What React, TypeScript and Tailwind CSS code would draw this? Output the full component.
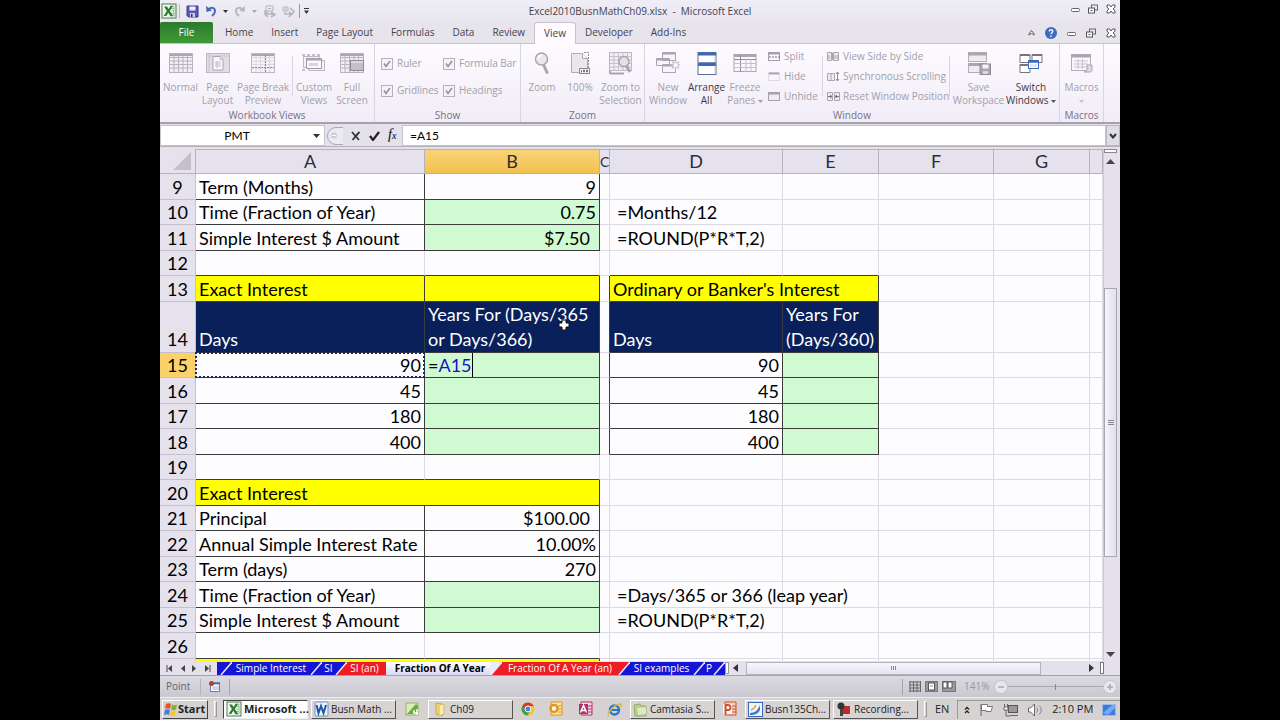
import type { ReactNode } from "react"
import clsx from "clsx"

const ribbonTabs = ["Home", "Insert", "Page Layout", "Formulas", "Data", "Review", "View", "Developer", "Add-Ins"]

type Cell = {
  text?: ReactNode
  fill?: "yellow" | "navy" | "green"
  right?: boolean
  boxed?: boolean
  span?: number
  pad?: boolean
  label?: string
}

type Row = { n?: number, h: "short" | "tall" | "double" | "cut", cells: Cell[] }

const box = (text?: ReactNode, fill?: Cell["fill"], rest: Partial<Cell> = {}): Cell => ({ text, fill, boxed: true, ...rest })
const num = (text: ReactNode, fill?: Cell["fill"], pad = false): Cell => ({ text, fill, boxed: true, right: true, pad })
const gap: Cell = {}

const rows: Row[] = [
  { n: 9, h: "tall", cells: [box("Term (Months)"), num("9")] },
  { n: 10, h: "short", cells: [box("Time (Fraction of Year)"), num("0.75", "green"), gap, { text: "=Months/12", pad: true }] },
  { n: 11, h: "tall", cells: [box("Simple Interest $ Amount"), num("$7.50", "green", true), gap, { text: "=ROUND(P*R*T,2)", pad: true }] },
  { n: 12, h: "short", cells: [] },
  { n: 13, h: "tall", cells: [box("Exact Interest", "yellow"), box("", "yellow"), gap, box("Ordinary or Banker's Interest", "yellow", { span: 2 })] },
  { n: 14, h: "double", cells: [box("Days", "navy"), box(<>Years For (Days/365<br />or Days/366)</>, "navy", { label: "pointer" }), gap, box("Days", "navy"), box(<>Years For<br />(Days/360)</>, "navy")] },
  { n: 15, h: "short", cells: [{ ...num("90"), label: "marching" }, box("", "green", { label: "editing" }), gap, num("90"), box("", "green")] },
  { n: 16, h: "tall", cells: [num("45"), box("", "green"), gap, num("45"), box("", "green")] },
  { n: 17, h: "short", cells: [num("180"), box("", "green"), gap, num("180"), box("", "green")] },
  { n: 18, h: "tall", cells: [num("400"), box("", "green"), gap, num("400"), box("", "green")] },
  { n: 19, h: "short", cells: [] },
  { n: 20, h: "tall", cells: [box("Exact Interest", "yellow", { span: 2 })] },
  { n: 21, h: "short", cells: [box("Principal"), num("$100.00", undefined, true)] },
  { n: 22, h: "tall", cells: [box("Annual Simple Interest Rate"), num("10.00%")] },
  { n: 23, h: "short", cells: [box("Term (days)"), num("270")] },
  { n: 24, h: "tall", cells: [box("Time (Fraction of Year)"), box("", "green"), gap, { text: "=Days/365 or 366 (leap year)", pad: true }] },
  { n: 25, h: "short", cells: [box("Simple Interest $ Amount"), box("", "green"), gap, { text: "=ROUND(P*R*T,2)", pad: true }] },
  { n: 26, h: "tall", cells: [] },
  { h: "cut", cells: [box("", "yellow", { span: 2 })] },
]

const COLS = 8

// true when the grid position is covered by a boxed cell
const isBoxed = (row: Row | undefined, col: number) => {
  let at = 0
  for (const cell of row?.cells ?? []) {
    const span = cell.span ?? 1
    if (col >= at && col < at + span) return !!cell.boxed
    at += span
  }
  return false
}

/* ---------- icons ---------- */

const Svg = ({ w, h, children }: { w: number, h: number, children: ReactNode }) => (
  <svg width={w} height={h} viewBox={`0 0 ${w} ${h}`} fill="none" className="shrink-0" aria-hidden="true">{children}</svg>
)

const ExcelIcon = () => (
  <Svg w={16} h={16}>
    <rect x="1" y="1" width="14" height="14" fill="#f4faf2" stroke="#4a7a4c" />
    <path d="M9 3h4v10H9M10 5.500h3M10 8h3M10 10.500h3" stroke="#8fbd8d" />
    <path d="M3 3.500h3l1.500 2.500L9.500 3H12L8.800 8l3.400 5H9.300L7.300 9.800 5.300 13H2.600l3.300-5z" fill="#2c7a34" />
  </Svg>
)

const WordIcon = () => (
  <Svg w={15} h={16}>
    <rect x="1" y="1" width="13" height="14" rx="1" fill="#eef4fc" stroke="#6a8fc4" />
    <path d="M2.500 4l2 8 2.500-7 2.500 7 2.500-8" stroke="#1f55a5" strokeWidth="2" />
  </Svg>
)

const SaveIcon = () => (
  <Svg w={13} h={13}>
    <path d="M1 1h11v11H2.500L1 10.500z" fill="#5b57b8" stroke="#3c3a8c" />
    <path d="M3.500 1.500h6v4h-6z" fill="#eef" />
    <path d="M4 8h5v4H4z" fill="#cfd0ea" /><path d="M5 9h1.500v3H5z" fill="#333" />
  </Svg>
)

const UndoIcon = ({ flip = false }: { flip?: boolean }) => (
  <svg width="12" height="12" viewBox="0 0 12 12" fill="none" className={flip ? "-scale-x-100 shrink-0" : "shrink-0"} aria-hidden="true">
    <path d="M3 5c2-3 7-3 7 1 0 2-1 3.500-3 5" stroke={flip ? "#b9b6c0" : "#4468b8"} strokeWidth="2" />
    <path d="M1 1l.5 6L7 5.500z" fill={flip ? "#b9b6c0" : "#4468b8"} />
  </svg>
)

const Caret = ({ color = "#333" }: { color?: string }) => (
  <Svg w={5} h={3}><path d="M0 0h5L2.500 3z" fill={color} /></Svg>
)

const TraceIcon = ({ down = false }: { down?: boolean }) => (
  <Svg w={13} h={13}>
    <path d={down ? "M1 2h5v4H1zM2 4h3" : "M3 1h7v5H3zM5 3.500h3"} stroke="#b5b2bd" />
    <path d={down ? "M3 7v2h6M7 6.500L9.500 9 7 12M8 3l4 3.500-2 3" : "M2 5v4h9M5 6.500L2 9l3 3M8 7l4 2.500-4 2.500"} stroke="#b5b2bd" strokeWidth="1.500" />
  </Svg>
)

const gridLines = "M1 4.500h22M1 8h22M1 11.500h22M1 15h22M5 1v18M9.500 1v18M14 1v18M18.500 1v18"

const NormalIcon = () => (
  <Svg w={24} h={20}><rect x=".5" y=".5" width="23" height="19" fill="#f1eef5" stroke="#b9b4be" /><path d={gridLines} stroke="#b9b4be" /><path d="M1 2h22" stroke="#aaa5b0" strokeWidth="2" /></Svg>
)
const PageLayoutIcon = () => (
  <Svg w={24} h={20}><rect x=".5" y=".5" width="23" height="19" fill="#e2dde5" stroke="#bdb8c2" /><path d="M1 3h22M3 1v18" stroke="#c9c4ce" /><path d="M7 3.500h7l3 3V17H7z" fill="#faf8fc" stroke="#aaa5b0" /><path d="M14 3.500v3h3M9 9h6M9 11h6M9 13h6M11 8v7" stroke="#c5c0ca" /></Svg>
)
const PageBreakIcon = () => (
  <Svg w={24} h={20}><rect x=".5" y=".5" width="23" height="19" fill="#f6f3f8" stroke="#bdb8c2" /><path d={gridLines} stroke="#dcd8e0" /><path d="M1 2h22" stroke="#aaa5b0" strokeWidth="2" /><path d="M14.500 2v17M1 14.500h22" stroke="#8f8a95" strokeDasharray="2 1" /></Svg>
)
const CustomViewsIcon = () => (
  <Svg w={24} h={20}><path d="M1.500 3.500h16v11h-16zM6.500 7.500h16v10h-16z" stroke="#bcb7c1" fill="#f4f1f7" /><path d="M4.500 5.500h15v10h-15z" stroke="#a09ba6" fill="#faf8fc" /><path d="M5 6.500h14" stroke="#aaa5b0" strokeWidth="2" /><path d="M7 10h9v3H7z" fill="#d9d4de" /><path d="M0 2h3M5 2h3M10 2h3M15 2h3M0 17h3" stroke="#8f8a95" /></Svg>
)
const FullScreenIcon = () => (
  <Svg w={24} h={20}><rect x=".5" y=".5" width="23" height="19" fill="#f1eef5" stroke="#b9b4be" /><path d={gridLines} stroke="#b9b4be" /><path d="M1 2h22" stroke="#aaa5b0" strokeWidth="2" /><rect x="10.500" y="7.500" width="13" height="10" fill="#c4bfca" stroke="#8f8a95" /><path d="M11 9h12" stroke="#f5f2f8" /></Svg>
)
const ZoomIcon = () => (
  <Svg w={16} h={23}><path d="M9.500 12.500l3.500 8" stroke="#a9a5ad" strokeWidth="3" strokeLinecap="round" /><circle cx="7.500" cy="7" r="6" fill="#e9e7ed" stroke="#a9a5ad" strokeWidth="1.500" /><path d="M4 7c0-2 1.500-3.500 4-3.500" stroke="#fff" strokeWidth="1.500" /></Svg>
)
const HundredIcon = () => (
  <Svg w={20} h={23}><path d="M1.500 1.500h11l5 5v14h-16z" fill="#ebe5ec" stroke="#b2adb7" /><path d="M12.500 1.500v5h5" fill="#fff" stroke="#aaa5b0" /><path d="M18.500 2v20M14 .5h5" stroke="#918c97" strokeDasharray="2 1" /><rect x="9.500" y="16.500" width="10" height="5" fill="#fff" stroke="#8a8590" /><path d="M11.500 18v2.500M13.500 18h1v2h-1zM16.500 18h1v2h-1z" stroke="#77727d" /></Svg>
)
const ZoomSelIcon = () => (
  <Svg w={24} h={23}><rect x=".5" y=".5" width="22" height="18" fill="#f1eef5" stroke="#bcb7c1" /><path d={gridLines} stroke="#c5c0ca" /><path d="M1 21.500h14M1 19v3" stroke="#aaa5b0" strokeWidth="2" /><circle cx="15" cy="9.500" r="5" fill="#e4e0e8" stroke="#a9a5ad" strokeWidth="1.500" /><path d="M17.500 14l3.500 6" stroke="#aaa5b0" strokeWidth="3" /></Svg>
)
const NewWindowIcon = () => (
  <Svg w={24} h={24}><path d="M6.500 1.500h13v8h-13zM.5 7.500h13v7H.500zM6.500 13.500h13v8h-13z" fill="#f8f5fa" stroke="#aaa5b0" /><path d="M7 2.500h12M1 8.500h12M7 14.500h12" stroke="#aaa5b0" strokeWidth="2" /><path d="M19.500 9v10M14.500 14h10M16 10.500l7 7M23 10.500l-7 7" stroke="#c5c0ca" strokeWidth="1.500" /><circle cx="19.500" cy="14" r="2" fill="#fff" /></Svg>
)
const ArrangeIcon = () => (
  <Svg w={20} h={23}><rect x="1" y=".5" width="18" height="22" fill="#fff" stroke="#5d6f90" /><path d="M1 2h18M1 12.500h18" stroke="#3c68bd" strokeWidth="3" /><path d="M1 10.500h18" stroke="#7b91bd" /><path d="M18 5v5M18 15v6" stroke="#ccd" /></Svg>
)
const FreezeIcon = () => (
  <Svg w={24} h={19}><rect x="1" y=".5" width="22" height="17" fill="#faf8fc" stroke="#aaa5b0" /><path d="M1 1.500h22" stroke="#aaa5b0" strokeWidth="3" /><path d="M1 5.500h22M7.500 1v17" stroke="#918c97" /><path d="M1 9.500h22M1 13.500h22M13 5v13M18 5v13" stroke="#c5c0ca" /></Svg>
)
const SaveWorkspaceIcon = () => (
  <Svg w={24} h={24}><rect x="1.500" y="1.500" width="18" height="9" fill="#eeebf1" stroke="#b2adb7" /><rect x="1.500" y="12.500" width="18" height="9" fill="#eeebf1" stroke="#b2adb7" /><path d="M1 3h19M1 13.500h19" stroke="#aaa5b0" strokeWidth="3" /><rect x="13" y="13" width="10.500" height="10.500" fill="#aaa5b0" stroke="#8f8a95" /><path d="M15.500 13.500h6v4h-6z" fill="#f5f2f8" /><path d="M16 20h5v3h-5z" fill="#dcd8e0" /></Svg>
)
const SwitchIcon = () => (
  <Svg w={24} h={20}><path d="M1 1.500h10v8H1zM13 1.500h10v8H13zM1 11.500h10v8H1z" fill="#fff" stroke="#77727d" /><path d="M1 2h10M13 2h10M1 12h10" stroke="#77727d" strokeWidth="2" /><rect x="9.500" y="7.500" width="10" height="8" fill="#fff" stroke="#3c68bd" /><path d="M9 8.500h11" stroke="#3c68bd" strokeWidth="2.500" /><path d="M11 11h7v3h-7z" fill="#dfe9fb" /></Svg>
)
const MacrosIcon = () => (
  <Svg w={22} h={19}><rect x=".5" y=".5" width="19" height="16" fill="#faf8fc" stroke="#b2adb7" /><path d="M0 2h20" stroke="#aaa5b0" strokeWidth="3" /><path d="M3 7h14M3 10h14M3 13h14M7 5v10M11.500 5v10" stroke="#c9c0cc" /><path d="M13 18h6c1 0 2-1 2-2v-5h-5v5c0 1-2 1-3 2z" fill="#dcd8e0" stroke="#aaa5b0" /></Svg>
)

const SmallIcon = ({ kind }: { kind: string }) => (
  <Svg w={13} h={11}>
    {kind === "Split" && <><rect x=".5" y="1.500" width="11" height="8" stroke="#a5a0ab" /><path d="M1 2.500h10" stroke="#a5a0ab" strokeWidth="2" /><path d="M1 6h11" stroke="#77727d" strokeDasharray="2 1" /></>}
    {kind === "Hide" && <><rect x=".5" y="1.500" width="11" height="8" stroke="#c5c0ca" strokeDasharray="1 1" /><path d="M1 2.500h10" stroke="#aaa5b0" strokeWidth="2" /></>}
    {kind === "Unhide" && <><rect x=".5" y="1.500" width="11" height="8" fill="#eeebf1" stroke="#a5a0ab" /><path d="M1 2.500h10" stroke="#a5a0ab" strokeWidth="2" /></>}
    {kind === "View Side by Side" && <><path d="M.5 1.500h4v8h-4zM6.500 1.500h5v8h-5z" fill="#eeebf1" stroke="#aaa5b0" /><path d="M2 4v4M8 4v4M10 4v4M4 2h1.500v7" stroke="#aaa5b0" /></>}
    {kind === "Synchronous Scrolling" && <><path d="M.5 2.500h7v7h-7zM4 3v7" fill="#eeebf1" stroke="#aaa5b0" /><path d="M10.500 1v9M9 3l1.500-2L12 3M9 8l1.500 2L12 8" stroke="#918c97" /></>}
    {kind === "Reset Window Position" && <><path d="M.5 1.500h5v8h-5zM7.500 1.500h5v8h-5z" fill="#eeebf1" stroke="#aaa5b0" /><path d="M1 5.500h4M3 4l2 1.500L3 7M12 5.500H8M10 4L8 5.500 10 7" stroke="#77727d" /></>}
  </Svg>
)

const WindowButtons = ({ gapClass }: { gapClass: string }) => (
  <div className={clsx("flex items-center", gapClass)}>
    <button type="button" aria-label="Minimize"><Svg w={9} h={10}><rect x=".5" y="4.500" width="8" height="3" rx="1" stroke="#666" fill="#fff" /></Svg></button>
    <button type="button" aria-label="Restore"><Svg w={10} h={10}><rect x="3.500" y="1" width="6" height="5" stroke="#666" /><rect x=".5" y="4" width="6" height="5" fill="#fff" stroke="#555" /><path d="M2.500 6.500h2" stroke="#555" /></Svg></button>
    <button type="button" aria-label="Close"><Svg w={10} h={10}><path d="M1 1h2.500L5 3l1.500-2H9v2L7.200 5 9 7v2H6.500L5 7 3.500 9H1V7l1.800-2L1 3z" fill="#fff" stroke="#555" /></Svg></button>
  </div>
)

/* ---------- ribbon pieces ---------- */

const Big = ({ icon, children, w, dark = false }: { icon: ReactNode, children: ReactNode, w: string, dark?: boolean }) => (
  <button type="button" className={clsx("flex flex-col items-center shrink-0 whitespace-nowrap leading-[13px] pt-[3px]", w, dark ? "text-[#3e3a46]" : "text-[#a39fa9]")}>
    <span className="flex h-8 items-center mb-0.5">{icon}</span>
    <span>{children}</span>
  </button>
)

const Group = ({ title, w, children }: { title: string, w: string, children: ReactNode }) => (
  <div className={clsx("flex flex-col shrink-0 border-r border-[#d9d5e0]", w)}>
    <div className="flex grow">{children}</div>
    <p className="text-center leading-[14px] text-[#77727f]">{title}</p>
  </div>
)

const Check = ({ label }: { label: string }) => (
  <label className="flex items-center h-[27px] gap-1 whitespace-nowrap text-[#a39fa9]">
    <span className="relative flex">
      <input type="checkbox" defaultChecked className="appearance-none size-3 border border-[#b5b0bb] bg-[#f4f2f7]" />
      <svg width="12" height="12" viewBox="0 0 12 12" fill="none" className="absolute inset-0 pointer-events-none" aria-hidden="true"><path d="M3 5.500l2 3L9 3" stroke="#928d99" strokeWidth="1.500" /></svg>
    </span>
    {label}
  </label>
)

const Small = ({ label }: { label: string }) => (
  <button type="button" className="flex items-center h-5 gap-[3px] whitespace-nowrap text-[#a39fa9]"><SmallIcon kind={label} />{label}</button>
)

const Divider = () => <div className="w-px h-10 mt-3 shrink-0 bg-[#d9d5e0]" />

/* ---------- sheet tabs ---------- */

const Slash = ({ from, to }: { from: string, to: string }) => (
  <Svg w={12} h={13}>
    <path d="M0 0h12L1 13H0z" fill={from} /><path d="M12 0v13H1z" fill={to} /><path d="M1 13L12 0" stroke="#e8e6f4" strokeWidth="1.500" />
  </Svg>
)

const BLUE = "#1515d8"
const RED = "#ee1c24"

const TabBar = () => (
  <nav className="flex items-center h-[13px] text-[10px] leading-[13px] whitespace-nowrap text-white">
    <div className="w-[3px] h-full bg-[#1515d8]" />
    <Slash from={BLUE} to={BLUE} />
    <button type="button" className="w-[78px] bg-[#1515d8] text-center">Simple Interest</button>
    <Slash from={BLUE} to={BLUE} />
    <button type="button" className="w-[13px] bg-[#1515d8]">SI</button>
    <Slash from={BLUE} to={RED} />
    <button type="button" className="w-[39px] bg-[#ee1c24] pr-1 text-center">SI (an)</button>
    <button type="button" className="w-[104px] bg-linear-to-b from-white to-[#d9d8f4] pl-1 text-center font-bold text-black">Fraction Of A Year</button>
    <Slash from="#ecebfa" to={RED} />
    <button type="button" className="w-[116px] bg-[#ee1c24] text-center">Fraction Of A Year (an)</button>
    <Slash from={RED} to={BLUE} />
    <button type="button" className="w-[63px] bg-[#1515d8] text-center">SI examples</button>
    <Slash from={BLUE} to={BLUE} />
    <button type="button" className="w-2 bg-[#1515d8]">P</button>
    <Slash from={BLUE} to={BLUE} />
  </nav>
)

/* ---------- taskbar ---------- */

const TaskButton = ({ icon, children, active = false }: { icon: ReactNode, children: ReactNode, active?: boolean }) => (
  <button type="button" className={clsx("flex items-center w-[85px] h-[19px] shrink-0 gap-0.5 pl-0.5 border whitespace-nowrap", active ? "bg-white text-[11px] font-bold border-t-[#444] border-l-[#444] border-r-[#eee] border-b-[#eee]" : "bg-[#d8d4d4] text-[10px] border-t-white border-l-white border-r-[#555] border-b-[#555]")}>
    {icon}{children}
  </button>
)

const OfficeIcon = ({ letter, color, paper }: { letter: string, color: string, paper: string }) => (
  <button type="button" aria-label={letter} className="shrink-0">
    <Svg w={16} h={16}>
      <path d="M3 1h11v13H3z" fill={paper} stroke={color} /><path d="M10 5h4M10 8h4M10 11h4" stroke={color} />
      {letter === "Outlook" && <circle cx="6" cy="7.500" r="3.500" fill="#fff" stroke={color} strokeWidth="2.500" />}
      {letter === "Access" && <><path d="M1 3h9v10H1z" fill={color} /><path d="M2.500 11.500l3-7 3 7M4 9.500h3" stroke="#fff" strokeWidth="1.500" /></>}
      {letter === "PowerPoint" && <><path d="M1 3h9v10H1z" fill="#fff" /><path d="M3.500 13V4h2.500a2.500 2.500 0 010 5H4" stroke={color} strokeWidth="2" /></>}
    </Svg>
  </button>
)

const Folder = () => (
  <Svg w={17} h={15}><path d="M5 1l6 1v12l-6-2z" fill="#f2d77c" stroke="#d0a93c" /><path d="M8 3l5-1v10l-5 2z" fill="#fbeeb0" stroke="#d9b95a" /></Svg>
)

const App = () => {
  return (
    <div className="min-h-screen bg-black font-['Open_Sans','Noto_Sans',sans-serif]">
      <main className="flex flex-col w-3/4 h-screen mx-auto overflow-hidden bg-[#e4e1ea] text-[10px] text-[#333]">

        {/* title bar */}
        <header className="relative flex items-center h-[22px] shrink-0 pl-px pr-1 bg-linear-to-b from-[#efedf6] to-[#e9e6ef]">
          <div className="flex items-center">
            <ExcelIcon />
            <div className="w-px h-3.5 ml-0.5 mr-1.5 bg-[#bbb]" />
            <button type="button" aria-label="Save"><SaveIcon /></button>
            <button type="button" aria-label="Undo" className="flex items-center gap-1.5 ml-1.5"><UndoIcon /><Caret /></button>
            <button type="button" aria-label="Redo" className="flex items-center gap-1.5 ml-1.5"><UndoIcon flip /><Caret color="#aaa" /></button>
            <button type="button" aria-label="Trace precedents" className="ml-1.5"><TraceIcon /></button>
            <button type="button" aria-label="Trace dependents" className="ml-1.5"><TraceIcon down /></button>
            <div className="w-px h-3.5 mx-1 bg-[#999]" />
            <button type="button" aria-label="Customize toolbar"><Svg w={5} h={6}><path d="M0 .5h5" stroke="#333" /><path d="M0 2.500h5L2.500 6z" fill="#333" /></Svg></button>
          </div>
          <h1 className="absolute inset-x-0 text-center pointer-events-none text-[#45414c]">Excel2010BusnMathCh09.xlsx&nbsp; -&nbsp; Microsoft Excel</h1>
          <div className="ml-auto mb-1"><WindowButtons gapClass="gap-2" /></div>
        </header>

        {/* ribbon tabs */}
        <nav className="flex items-stretch h-[22px] shrink-0 pr-1 bg-[#e7e4ec] border-b border-[#c6c2cc]">
          <button type="button" className="w-[53px] mr-[3px] rounded-t-xs bg-linear-to-b from-[#2b7a2e] to-[#3f9a35] text-white">File</button>
          {ribbonTabs.map((tab) => (
            <button
              key={tab} type="button"
              className={clsx("px-[9px] whitespace-nowrap text-[#45414c]", tab === "View" && "-mb-px rounded-t-sm border border-b-0 border-[#c6c2cc] bg-[#fdfbff]")}
            >
              {tab}
            </button>
          ))}
          <div className="flex items-center gap-2.5 ml-auto">
            <button type="button" aria-label="Collapse ribbon"><Svg w={7} h={7}><path d="M.5 5.500l3-4 3 4-1 .5-2-2-2 2z" stroke="#555" fill="#fff" /></Svg></button>
            <button type="button" aria-label="Help"><Svg w={12} h={12}><circle cx="6" cy="6" r="6" fill="#3b6cc0" /><path d="M4.200 4.500c0-2.500 3.800-2.200 3.600 0C7.700 5.700 6 5.700 6 7.300M6 8.500V10" stroke="#fff" strokeWidth="1.300" /></Svg></button>
            <WindowButtons gapClass="gap-2.5" />
          </div>
        </nav>

        {/* ribbon */}
        <section className="flex h-20 shrink-0 border-b-2 border-[#a5a1aa] bg-linear-to-b from-[#fdfbff] to-[#f1ecf7]">
          <Group title="Workbook Views" w="w-[215px]">
            <div className="flex pl-0.5">
              <Big w="w-[37px]" icon={<NormalIcon />}>Normal</Big>
              <Big w="w-[37px]" icon={<PageLayoutIcon />}>Page<br />Layout</Big>
              <Big w="w-[54px]" icon={<PageBreakIcon />}>Page Break<br />Preview</Big>
              <div className="flex mx-0.5"><Divider /></div>
              <Big w="w-[38px]" icon={<CustomViewsIcon />}>Custom<br />Views</Big>
              <Big w="w-[38px]" icon={<FullScreenIcon />}>Full<br />Screen</Big>
            </div>
          </Group>
          <Group title="Show" w="w-[146px]">
            <div className="grid grid-cols-[62px_auto] content-start pt-1.5 pl-1.5">
              <Check label="Ruler" />
              <Check label="Formula Bar" />
              <Check label="Gridlines" />
              <Check label="Headings" />
            </div>
          </Group>
          <Group title="Zoom" w="w-[124px]">
            <div className="flex pl-0.5">
              <Big w="w-[38px]" icon={<ZoomIcon />}>Zoom</Big>
              <Big w="w-[38px]" icon={<HundredIcon />}>100%</Big>
              <Big w="w-[43px]" icon={<ZoomSelIcon />}>Zoom to<br />Selection</Big>
            </div>
          </Group>
          <Group title="Window" w="w-[415px]">
            <div className="flex grow pl-1">
              <Big w="w-[38px]" icon={<NewWindowIcon />}>New<br />Window</Big>
              <Big w="w-[39px]" icon={<ArrangeIcon />} dark>Arrange<br />All</Big>
              <Big w="w-[38px]" icon={<FreezeIcon />}>Freeze<br />Panes <span className="inline-flex align-middle"><Caret color="#a39fa9" /></span></Big>
              <div className="w-[54px] pt-0.5 pl-1"><Small label="Split" /><Small label="Hide" /><Small label="Unhide" /></div>
              <div className="flex mx-1"><Divider /></div>
              <div className="w-[120px] pt-0.5"><Small label="View Side by Side" /><Small label="Synchronous Scrolling" /><Small label="Reset Window Position" /></div>
              <div className="flex mx-0.5"><Divider /></div>
              <Big w="w-[53px]" icon={<SaveWorkspaceIcon />}>Save<br />Workspace</Big>
              <Big w="w-[52px]" icon={<SwitchIcon />} dark>Switch<br />Windows <span className="inline-flex align-middle"><Caret color="#555" /></span></Big>
            </div>
          </Group>
          <Group title="Macros" w="w-[44px]">
            <Big w="w-[43px]" icon={<MacrosIcon />}>Macros<br /><span className="inline-flex align-middle"><Caret color="#c5c0ca" /></span></Big>
          </Group>
        </section>

        {/* formula bar */}
        <div className="flex h-[22px] shrink-0 mt-px border-b border-[#b5b1bc] font-[Lato,sans-serif] text-[12px] text-black">
          <div className="flex items-center w-[165px] pr-1 bg-white border border-[#c6c2cc]">
            <input aria-label="Name box" defaultValue="PMT" className="w-full min-w-0 bg-transparent text-center outline-none" />
            <button type="button" aria-label="Name list"><Svg w={7} h={4}><path d="M0 0h7L3.500 4z" fill="#333" /></Svg></button>
          </div>
          <div className="flex items-center w-[77px] gap-2 pl-0.5 bg-[#e4e1ec]">
            <Svg w={16} h={18}><path d="M16 .5H9a8 8 0 000 17h7" fill="#eceaf1" stroke="#aaa6b2" /><circle cx="7" cy="8.500" r="3" fill="#cfccd6" /><path d="M5 8.500h4" stroke="#fff" /></Svg>
            <button type="button" aria-label="Cancel"><Svg w={10} h={10}><path d="M1 1l7 8M8.500 1C6 3.500 4 6 1.500 9" stroke="#333" strokeWidth="1.800" /></Svg></button>
            <button type="button" aria-label="Enter"><Svg w={11} h={10}><path d="M1 5l3 4 6-8" stroke="#222" strokeWidth="2.200" /></Svg></button>
            <button type="button" aria-label="Insert function" className="font-['Liberation_Serif',serif] text-[14px] italic leading-4">f<span className="text-[10px]">x</span></button>
          </div>
          <input aria-label="Formula" defaultValue="=A15" className="grow min-w-0 pl-[7px] bg-white border border-[#c6c2cc] outline-none" />
          <button type="button" aria-label="Expand formula bar" className="flex items-center justify-center w-3.5 bg-[#dfdce6] border border-[#bbb7c2]"><Svg w={8} h={6}><path d="M1 1l3 3.500L7 1" stroke="#333" strokeWidth="2" /></Svg></button>
        </div>

        {/* sheet */}
        <div className="flex grow min-h-0 pt-0.5">
          <div className="grow min-w-0 overflow-hidden bg-[#fdfcff]">
            <table className="w-full table-fixed border-separate border-spacing-0 font-[Lato,sans-serif] text-[18px] leading-6 text-black [font-variant-ligatures:none]">
              <colgroup>
                <col className="w-[36px]" />
                <col className="w-[229px]" />
                <col className="w-[175px]" />
                <col className="w-[10px]" />
                <col className="w-[173px]" />
                <col className="w-[96px]" />
                <col className="w-[115px]" />
                <col className="w-[96px]" />
                <col />
              </colgroup>
              <thead>
                <tr className="h-[25px] bg-[#e5e2ee] text-[#2f2b38]">
                  <th className="p-0 border-r border-b border-[#b5b1bd]"><svg width="18" height="18" viewBox="0 0 18 18" className="ml-auto mr-1" aria-hidden="true"><path d="M18 0v18H0z" fill="#c3c0ca" /></svg></th>
                  {["A", "B", "C", "D", "E", "F", "G", ""].map((col) => (
                    <th key={col} className={clsx("p-0 border-t border-r border-b border-[#b5b1bd] font-normal leading-[23px]", col === "B" && "bg-linear-to-b from-[#f9d478] to-[#f3c04c]", col === "C" && "text-[14px]")}>{col}</th>
                  ))}
                </tr>
              </thead>
              <tbody>
                {rows.map((row, r) => {
                  const cells = [...row.cells]
                  let used = cells.reduce((sum, c) => sum + (c.span ?? 1), 0)
                  while (used++ < COLS) cells.push(gap)
                  let at = 0
                  return (
                    <tr key={r} className={clsx(row.h === "tall" && "h-[26px]", row.h === "short" && "h-[25px]", row.h === "double" && "h-[51px] leading-[25px]", row.h === "cut" && "h-[25px]")}>
                      <th className={clsx("p-0 border-r border-b border-[#c4c0cc] font-normal align-bottom", row.n === 15 ? "bg-[#fbd169]" : "bg-[#e5e2ee]")}>{row.n}</th>
                      {cells.map((cell, i) => {
                        const start = at
                        at += cell.span ?? 1
                        // a box darkens the gridlines of the cells to its left and above
                        const darkR = cell.boxed || isBoxed(row, at)
                        const darkB = cell.boxed || isBoxed(rows[r + 1], start)
                        return (
                          <td
                            key={i} colSpan={cell.span}
                            className={clsx(
                              "relative py-0 border-r border-b align-bottom whitespace-nowrap",
                              cell.pad ? (cell.right ? "px-[9px]" : "px-[7px]") : "px-[3px]",
                              darkR ? "border-r-[#3c3c3c]" : "border-r-[#dddae3]",
                              darkB ? "border-b-[#3c3c3c]" : "border-b-[#dddae3]",
                              cell.right && "text-right",
                              cell.fill === "yellow" && "bg-[#ffff00]",
                              cell.fill === "navy" && "bg-[#0a205a] text-white",
                              cell.fill === "green" && "bg-[#d0fad2]"
                            )}
                          >
                            {cell.text}
                            {cell.label === "marching" && <span className="absolute -inset-px border-2 border-dotted border-[#23235a]" />}
                            {cell.label === "editing" && <span className="inline-flex align-bottom">=<span className="border-r border-black text-[#1414c8]">A15</span></span>}
                            {cell.label === "pointer" && (
                              <svg width="12" height="12" viewBox="0 0 12 12" className="absolute left-[133px] top-[17px]" aria-hidden="true"><path d="M4 1h4v3h3v4H8v3H4V8H1V4h3z" fill="#fff" stroke="#111" /></svg>
                            )}
                          </td>
                        )
                      })}
                    </tr>
                  )
                })}
              </tbody>
            </table>
          </div>
          {/* vertical scrollbar */}
          <div className="flex flex-col items-center w-3.5 mr-[3px] shrink-0 bg-[#e4e1ec] border-l border-[#cfccd7]">
            <div className="w-full h-1 border border-[#8a8692] bg-white" />
            <button type="button" aria-label="Scroll up" className="pt-1.5 pb-1"><Svg w={9} h={5}><path d="M0 5h9L4.500 0z" fill="#444" /></Svg></button>
            <div className="basis-[120px] shrink-0" />
            <div className="flex flex-col items-center justify-center gap-px w-full grow border border-[#aaa6b3] bg-linear-to-r from-[#f6f4fc] to-[#e2dfec]">
              <span className="w-1.5 h-px bg-[#888]" /><span className="w-1.5 h-px bg-[#888]" /><span className="w-1.5 h-px bg-[#888]" />
            </div>
            <div className="basis-[95px] shrink-0" />
            <button type="button" aria-label="Scroll down" className="pb-1"><Svg w={9} h={5}><path d="M0 0h9L4.500 5z" fill="#444" /></Svg></button>
          </div>
        </div>

        {/* sheet tabs and horizontal scrollbar */}
        <div className="flex items-center h-[15px] shrink-0 pr-4 bg-[#e4e1ec] border-b border-[#a5a1aa]">
          <div className="flex items-center justify-around w-[57px] px-0.5">
            <button type="button" aria-label="First sheet"><Svg w={7} h={7}><path d="M1 0v7" stroke="#444" /><path d="M6 0v7L2 3.500z" fill="#444" /></Svg></button>
            <button type="button" aria-label="Previous sheet"><Svg w={4} h={7}><path d="M4 0v7L0 3.500z" fill="#444" /></Svg></button>
            <button type="button" aria-label="Next sheet"><Svg w={4} h={7}><path d="M0 0v7l4-3.500z" fill="#444" /></Svg></button>
            <button type="button" aria-label="Last sheet"><Svg w={7} h={7}><path d="M6 0v7" stroke="#444" /><path d="M1 0v7l4-3.500z" fill="#444" /></Svg></button>
          </div>
          <TabBar />
          <div className="w-1 h-3 border border-[#999] bg-white" />
          <button type="button" aria-label="Scroll left" className="pl-1 pr-2"><Svg w={5} h={8}><path d="M5 0v8L0 4z" fill="#333" /></Svg></button>
          <div className="flex items-center justify-center gap-px grow h-[13px] border border-[#b5b1bd] bg-linear-to-b from-[#f8f6fd] to-[#e6e3ef]">
            <span className="w-px h-1 bg-[#888]" /><span className="w-px h-1 bg-[#888]" /><span className="w-px h-1 bg-[#888]" />
          </div>
          <div className="w-12" />
          <button type="button" aria-label="Scroll right" className="pr-1.5"><Svg w={5} h={8}><path d="M0 0v8l5-4z" fill="#333" /></Svg></button>
          <div className="w-1 h-3 border border-[#777] bg-white" />
        </div>

        {/* status bar */}
        <footer className="flex items-center h-[21px] shrink-0 pl-1.5 pr-[3px] bg-linear-to-b from-[#dcdae1] to-[#c9c7cf] text-[#66626e]">
          <span className="w-[34px]">Point</span>
          <div className="w-px h-4 mr-2 bg-[#b5b1bd]" />
          <button type="button" aria-label="Record macro"><Svg w={12} h={11}><rect x="1.500" y="1.500" width="9" height="9" fill="#fff" stroke="#6a80b0" /><path d="M1 2.500h10" stroke="#5a78b8" strokeWidth="2" /><path d="M3 6h7M3 8h7" stroke="#aac" /><circle cx="2.500" cy="2.500" r="2.500" fill="#c0392b" /></Svg></button>
          <div className="w-px h-4 ml-2 bg-[#a5a1ad]" />
          <div className="w-px h-4 ml-auto mr-1.5 bg-[#a5a1ad]" />
          <div className="flex items-center gap-1">
            <button type="button" aria-label="Normal view"><Svg w={12} h={11}><path d="M0 1h12M0 4h12M0 7h12M0 10h12M1 0v11M4.500 0v11M8 0v11M11.500 0v11" stroke="#666" /></Svg></button>
            <button type="button" aria-label="Page layout view"><Svg w={13} h={11}><rect x=".5" y=".5" width="12" height="10" fill="#999" stroke="#777" /><rect x="3.500" y="2" width="6" height="7" fill="#fff" stroke="#555" /><path d="M5 5h3" stroke="#888" /></Svg></button>
            <button type="button" aria-label="Page break view"><Svg w={14} h={11}><rect x=".5" y=".5" width="13" height="10" fill="#999" stroke="#777" /><path d="M1 1h4v6H1zM6 1h4v6H6z" fill="#fff" stroke="#555" /></Svg></button>
          </div>
          <span className="w-8 pl-2 text-[#9a96a2]">141%</span>
          <button type="button" aria-label="Zoom out" className="ml-1.5"><Svg w={14} h={14}><circle cx="7" cy="7" r="6.500" fill="#e9e7ee" stroke="#c4c1ca" /><path d="M4 7h6" stroke="#aaa6b2" strokeWidth="1.500" /></Svg></button>
          <input
            type="range" aria-label="Zoom" defaultValue={50}
            className="w-[95px] h-3.5 appearance-none bg-[linear-gradient(#a9a6b0,#a9a6b0)] bg-[length:100%_1px] bg-center bg-no-repeat [&::-webkit-slider-thumb]:appearance-none [&::-webkit-slider-thumb]:w-px [&::-webkit-slider-thumb]:h-1.5 [&::-webkit-slider-thumb]:bg-[#8a8692]"
          />
          <button type="button" aria-label="Zoom in"><Svg w={14} h={14}><circle cx="7" cy="7" r="6.500" fill="#e9e7ee" stroke="#c4c1ca" /><path d="M4 7h6M7 4v6" stroke="#aaa6b2" strokeWidth="1.500" /></Svg></button>
        </footer>

        {/* taskbar */}
        <div className="flex items-center h-[23px] shrink-0 pl-0.5 bg-[#d6d2d2] border-t border-[#eeecec] text-[11px] text-[#222]">
          <button type="button" className="flex items-center w-[46px] h-[19px] border border-t-white border-l-white border-r-[#444] border-b-[#444] font-bold shrink-0">
            <Svg w={15} h={15}>
              <path d="M3 2c2-1 3-1 5 0L7 7C5 6 4 6 2 7z" fill="#e8542a" /><path d="M9 2.500c2 1 3 1 5 0l-1 5c-2 1-3 1-5 0z" fill="#7cb82f" /><path d="M2 8c2-1 3-1 5 0l-1 5c-2-1-3-1-5 0z" fill="#3c84d8" /><path d="M8 8.500c2 1 3 1 5 0l-1 5c-2 1-3 1-5 0z" fill="#f6c52c" />
            </Svg>
            Start
          </button>
          <div className="w-[3px] h-4 ml-1.5 mr-1.5 border border-l-white border-t-white border-r-[#999] border-b-[#999]" />
          <TaskButton icon={<ExcelIcon />} active>Microsoft ...</TaskButton>
          <div className="w-[3px] shrink-0" />
          <TaskButton icon={<WordIcon />}>Busn Math ...</TaskButton>
          <div className="flex justify-center w-8 shrink-0">
            <button type="button" aria-label="Notes"><Svg w={15} h={16}><rect x="1" y="2" width="12" height="12" fill="#d9ecc0" stroke="#8ab865" /><path d="M2 13l9-10 2 2v8z" fill="#6eab3f" /><path d="M9 9v3h4M12 8v6" stroke="#fff" strokeWidth="1.500" /></Svg></button>
          </div>
          <TaskButton icon={<Folder />}>Ch09</TaskButton>
          <div className="flex items-center justify-around w-[117px] px-px shrink-0">
            <button type="button" aria-label="Chrome"><Svg w={14} h={14}><circle cx="7" cy="7" r="6.500" fill="#f0c62f" /><path d="M1.400 3.700A6.500 6.500 0 0112.700 4L7 4.500 4 8z" fill="#d93c2f" /><path d="M1.400 3.700A6.500 6.500 0 006.500 13.500L9.500 8.500 4.500 8z" fill="#3f9f45" /><circle cx="7" cy="7" r="3" fill="#4a84d8" stroke="#fff" /></Svg></button>
            <OfficeIcon letter="Outlook" color="#e0961e" paper="#fbe6a8" />
            <OfficeIcon letter="Access" color="#b0306c" paper="#f5d8e5" />
            <button type="button" aria-label="Internet Explorer"><Svg w={15} h={15}><circle cx="7.500" cy="8" r="4.500" stroke="#2c78c8" strokeWidth="2.500" /><path d="M4 8h8" stroke="#2c78c8" strokeWidth="2" /><path d="M1.500 14C-.5 11 9 1 13.500 2c1 .5.5 2 0 3" stroke="#e2b540" strokeWidth="1.500" /></Svg></button>
          </div>
          <TaskButton icon={<Svg w={15} h={15}><path d="M1 3l6-1 1 2h5v10H2z" fill="#b8cf8f" stroke="#8fae5d" /><path d="M4 6l9-1v7l-8 1z" fill="#dbe8c3" /></Svg>}>Camtasia S...</TaskButton>
          <div className="flex justify-center w-[30px] shrink-0"><OfficeIcon letter="PowerPoint" color="#d0512c" paper="#f7cfc0" /></div>
          <TaskButton icon={<Svg w={15} h={15}><rect x=".5" y=".5" width="14" height="14" fill="#eef5ff" stroke="#3c68bd" /><path d="M2 11c5 0 8-3 10-8v5c-2 4-5 5-10 5z" fill="#3b78cc" /><path d="M3 8c3-1 4-3 5-5" stroke="#f0a030" strokeWidth="1.500" /></Svg>}>Busn135Ch...</TaskButton>
          <div className="w-[3px] shrink-0" />
          <TaskButton icon={<Svg w={16} h={15}><rect x="6" y="4" width="8" height="8" fill="#c02a2a" /><circle cx="5" cy="4" r="3.500" fill="#333" /><path d="M4 7h3v7H4z" fill="#444" /></Svg>}>Recording...</TaskButton>
          <div className="w-[3px] h-4 ml-1.5 border border-l-white border-t-white border-r-[#999] border-b-[#999]" />
          <span className="px-2">EN</span>
          <div className="flex items-center h-[19px] grow justify-between pl-1.5 pr-1 border-l border-t border-[#999]">
            <button type="button" aria-label="Show hidden icons"><Svg w={6} h={8}><path d="M1 3.500l2-2 2 2M1 7l2-2 2 2" stroke="#222" strokeWidth="1.300" /></Svg></button>
            <Svg w={15} h={14}><path d="M2 1v12" stroke="#666" /><path d="M2.500 1.500h6v2h5l-1.500 5H7v-1H2.500z" fill="#fff" stroke="#777" /></Svg>
            <Svg w={16} h={14}><rect x="5.500" y="2.500" width="9" height="7" fill="#999" stroke="#555" /><path d="M7 12.500h8M1.500 1v5h3V1M3 6v7h4" stroke="#666" /><path d="M1 4h4v3H1z" fill="#fff" stroke="#666" /></Svg>
            <Svg w={16} h={14}><path d="M1.500 5h2l4-4v12l-4-4h-2z" fill="#fff" stroke="#666" /><path d="M9.500 4.500c1.500 1.500 1.500 3.500 0 5M12 2.500c3 3 3 6 0 9" stroke="#888" /></Svg>
            <time>2:10 PM</time>
            <Svg w={14} h={12}><rect x=".5" y=".5" width="13" height="11" fill="#3d7ae0" stroke="#9bb8e8" /><path d="M1 9L10 1h3v3L6 11z" fill="#77a8f3" /></Svg>
          </div>
        </div>
      </main>
    </div>
  )
}

export default App
